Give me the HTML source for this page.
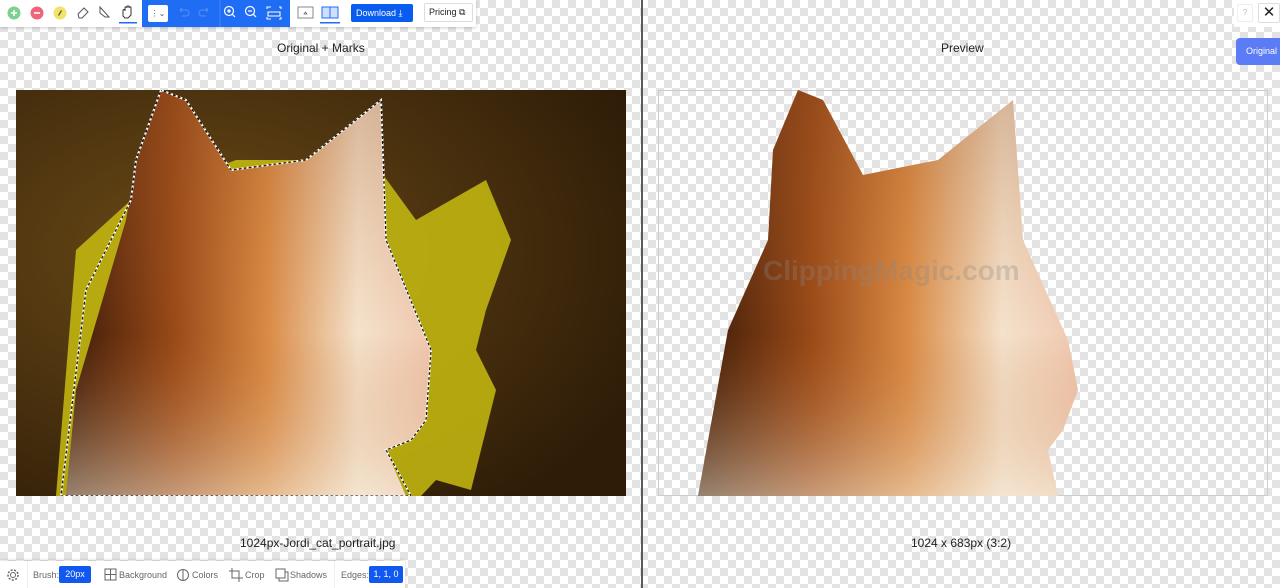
<!DOCTYPE html>
<html><head><meta charset="utf-8"><style>
*{margin:0;padding:0;box-sizing:border-box}
body{width:1280px;height:588px;overflow:hidden;font-family:"Liberation Sans",sans-serif;position:relative;
background-color:#fff;background-image:linear-gradient(45deg,#e3e3e3 25%,transparent 25%,transparent 75%,#e3e3e3 75%),linear-gradient(45deg,#e3e3e3 25%,transparent 25%,transparent 75%,#e3e3e3 75%);background-size:16px 16px;background-position:0 0,8px 8px}
.abs{position:absolute}
.tb{position:absolute;left:0;top:0;height:27px;width:476px;background:#fff;box-shadow:0 1px 3px rgba(0,0,0,.2)}
.blue{position:absolute;left:142px;top:0;width:148px;height:27px;background:#1f6cf5}
.lbl{font-size:12px;color:#222;position:absolute}
.bb{position:absolute;left:0;top:561px;width:405px;height:27px;background:#fff;box-shadow:0 -1px 3px rgba(0,0,0,.15);font-size:9px;color:#666}
.pill{position:absolute;background:#1058f0;color:#fff;border-radius:2px;font-size:9px;text-align:center;line-height:17px;height:17px}
</style></head><body>
<div class="tb">
 <svg class="abs" style="left:0;top:0" width="142" height="27">
  <circle cx="14" cy="13" r="6.5" fill="#7dd08f"/><path d="M11 13h6M14 10v6" stroke="#fff" stroke-width="1.6"/>
  <circle cx="37" cy="13" r="6.5" fill="#ee6677"/><path d="M34 13h6" stroke="#fff" stroke-width="1.6"/>
  <circle cx="60" cy="13" r="6.5" fill="#f2e16a"/><path d="M58.5 15.5l3-5" stroke="#444" stroke-width="1.2"/>
  <path d="M78 14l6-6 4 4-6 6h-3z" fill="none" stroke="#555" stroke-width="1"/>
  <path d="M100 7l9 10h-4l-5-4z" fill="none" stroke="#555" stroke-width="1"/>
  <path d="M123 16v-5c0-2 2-2 2 0v-3c0-1.5 2-1.5 2 0v-1c0-1.5 2-1.5 2 0v1c0-1.5 2-1.5 2 0v7l-3 3h-3z" fill="none" stroke="#333" stroke-width="1"/>
  <rect x="119" y="22" width="18" height="1.5" fill="#1f6cf5"/>
 </svg>
 <div class="blue">
  <div class="abs" style="left:6px;top:5px;width:20px;height:17px;background:#fff;border-radius:2px;font-size:8px;color:#555;text-align:center;line-height:17px">⋮⌄</div>
  <svg class="abs" style="left:0;top:0" width="148" height="27">
   <path d="M38 10h6a3 3 0 010 6h-4M38 10l2-2M38 10l2 2" fill="none" stroke="#5b8ff0" stroke-width="1"/>
   <path d="M66 10h-6a3 3 0 000 6h4M66 10l-2-2M66 10l-2 2" fill="none" stroke="#5b8ff0" stroke-width="1"/>
   <line x1="78" y1="0" x2="78" y2="27" stroke="#4a86f0"/>
   <circle cx="87" cy="11" r="4.5" fill="none" stroke="#fff" stroke-width="1.2"/><path d="M90 14l3 3M85 11h4M87 9v4" stroke="#fff" stroke-width="1.2"/>
   <circle cx="108" cy="11" r="4.5" fill="none" stroke="#fff" stroke-width="1.2"/><path d="M111 14l3 3M106 11h4" stroke="#fff" stroke-width="1.2"/>
   <path d="M125 9V7h4M137 7h2v2M139 17v2h-2M129 19h-4v-2M126 12h12v4h-12z" fill="none" stroke="#fff" stroke-width="1.1"/>
  </svg>
 </div>
 <svg class="abs" style="left:290px;top:0" width="60" height="27">
  <rect x="8" y="7" width="15" height="11" fill="none" stroke="#888" stroke-width="1"/><path d="M14 14l1.5-2 1.5 2z" fill="none" stroke="#666" stroke-width=".7"/>
  <rect x="32" y="7" width="16" height="11" fill="#cfe0ff" stroke="#1f6cf5"/><line x1="40" y1="7" x2="40" y2="18" stroke="#1f6cf5"/>
  <rect x="30" y="22" width="20" height="1.5" fill="#1f6cf5"/>
 </svg>
 <div class="abs" style="left:351px;top:4px;width:62px;height:18px;background:#0a5cf0;border-radius:2px;color:#fff;font-size:9px;line-height:18px;padding-left:5px">Download ⤓</div>
 <div class="abs" style="left:424px;top:3px;width:49px;height:19px;border:1px solid #ddd;border-radius:2px;color:#222;font-size:9px;line-height:17px;padding-left:4px">Pricing ⧉</div>
</div>

<div class="lbl" style="left:277px;top:41px">Original + Marks</div>
<div class="lbl" style="left:941px;top:41px">Preview</div>
<div class="lbl" style="left:240px;top:536px">1024px-Jordi_cat_portrait.jpg</div>
<div class="lbl" style="left:911px;top:536px">1024 x 683px (3:2)</div>

<div class="abs" style="left:641px;top:0;width:2px;height:588px;background:#5a5a5a"></div>

<svg class="abs" style="left:16px;top:90px" width="610" height="406">
 <defs>
  <radialGradient id="bg" cx="30%" cy="40%" r="80%"><stop offset="0" stop-color="#6a4a16"/><stop offset="1" stop-color="#2e1c08"/></radialGradient>
  <linearGradient id="cat2" x1="0" y1="0" x2="1" y2="0"><stop offset="0" stop-color="#3a1a08"/><stop offset=".3" stop-color="#9a4a18"/><stop offset=".55" stop-color="#d98a44"/><stop offset=".8" stop-color="#f4e2cc"/><stop offset="1" stop-color="#f0c8b0"/></linearGradient>
  <linearGradient id="shade" x1="0" y1="0" x2="0" y2="1"><stop offset="0" stop-color="#8a4a20" stop-opacity=".3"/><stop offset=".6" stop-color="#c07030" stop-opacity="0"/><stop offset="1" stop-color="#f4ead8" stop-opacity=".5"/></linearGradient>
 </defs>
 <rect width="610" height="406" fill="url(#bg)"/>
 <path d="M115 110L60 160 40 406H405L420 390 455 400 480 300 460 260 470 220 495 150 470 90 400 130 360 75 300 70 220 70z" fill="#c8bc10" opacity=".85"/>
 <path d="M145 0L170 10 215 80 290 70 365 10 370 150 415 260 410 330 395 350 370 360 390 406H50L60 300 110 130 120 70z" fill="url(#cat2)"/>
 <path d="M145 0L170 10 215 80 290 70 365 10 370 150 415 260 410 330 395 350 370 360 390 406H50L60 300 110 130 120 70z" fill="url(#shade)"/>
 <path d="M145 0L170 10 215 80 290 70 365 10 370 150 415 260 410 330 395 350 370 360 395 406H45L70 200 115 110 120 70z" fill="none" stroke="#fff" stroke-width="2" stroke-dasharray="3 2"/>
 <path d="M145 0L170 10 215 80 290 70 365 10 370 150 415 260 410 330 395 350 370 360 395 406H45L70 200 115 110 120 70z" fill="none" stroke="#111" stroke-width="1" stroke-dasharray="3 2" stroke-dashoffset="2"/>
</svg>

<div class="abs" style="left:658px;top:90px;width:610px;height:406px;border:1px solid #ccc"></div>
<svg class="abs" style="left:658px;top:90px" width="610" height="406">
 <path d="M140 0L165 10 205 85 280 70 355 10 365 150 410 250 420 300 405 340 390 360 400 406H40L70 240 110 150 115 60z" fill="url(#cat2)"/>
 <path d="M140 0L165 10 205 85 280 70 355 10 365 150 410 250 420 300 405 340 390 360 400 406H40L70 240 110 150 115 60z" fill="url(#shade)"/>
 <text x="105" y="190" font-family="Liberation Sans,sans-serif" font-size="28" font-weight="bold" fill="#888" opacity=".3">ClippingMagic.com</text>
</svg>

<div class="abs" style="left:1234px;top:0;width:46px;height:27px;background:#fff"></div>
<div class="abs" style="left:1237px;top:4px;width:16px;height:18px;border:1px solid #eee;border-radius:2px;font-size:8px;color:#bbb;text-align:center;line-height:16px">?</div>
<div class="abs" style="left:1258px;top:3px;width:22px;height:20px;border:1px solid #ddd;border-radius:2px;font-size:15px;color:#222;text-align:center;line-height:18px">✕</div>
<div class="abs" style="left:1236px;top:38px;width:44px;height:27px;background:#5b7cf5;border-radius:4px 0 0 4px;color:#fff;font-size:9px;line-height:27px;padding-left:10px">Original</div>

<div class="bb">
 <svg class="abs" style="left:6px;top:7px" width="14" height="14"><circle cx="7" cy="7" r="2.5" fill="none" stroke="#666"/><circle cx="7" cy="7" r="5" fill="none" stroke="#666" stroke-width="1.5" stroke-dasharray="2 1.5"/></svg>
 <div class="abs" style="left:27px;top:0;width:1px;height:27px;background:#eee"></div>
 <span class="abs" style="left:33px;top:9px">Brush:</span>
 <div class="pill" style="left:59px;top:5px;width:32px">20px</div>
 <svg class="abs" style="left:104px;top:7px" width="14" height="14"><rect x="1" y="1" width="11" height="11" fill="none" stroke="#666"/><path d="M1 6.5h11M6.5 1v11" stroke="#666"/></svg>
 <span class="abs" style="left:119px;top:9px">Background</span>
 <svg class="abs" style="left:176px;top:7px" width="14" height="14"><circle cx="7" cy="7" r="5.5" fill="none" stroke="#666"/><path d="M7 1.5v11" stroke="#666"/></svg>
 <span class="abs" style="left:192px;top:9px">Colors</span>
 <svg class="abs" style="left:229px;top:7px" width="14" height="14"><path d="M3 0v10h11M0 3h10v11" fill="none" stroke="#666"/></svg>
 <span class="abs" style="left:245px;top:9px">Crop</span>
 <svg class="abs" style="left:275px;top:7px" width="14" height="14"><rect x="1" y="1" width="9" height="9" fill="none" stroke="#666"/><path d="M10 4h3v9H4v-3" fill="none" stroke="#666"/></svg>
 <span class="abs" style="left:290px;top:9px">Shadows</span>
 <div class="abs" style="left:334px;top:0;width:1px;height:27px;background:#eee"></div>
 <span class="abs" style="left:341px;top:9px">Edges:</span>
 <div class="pill" style="left:369px;top:5px;width:34px">1, 1, 0</div>
</div>
</body></html>
